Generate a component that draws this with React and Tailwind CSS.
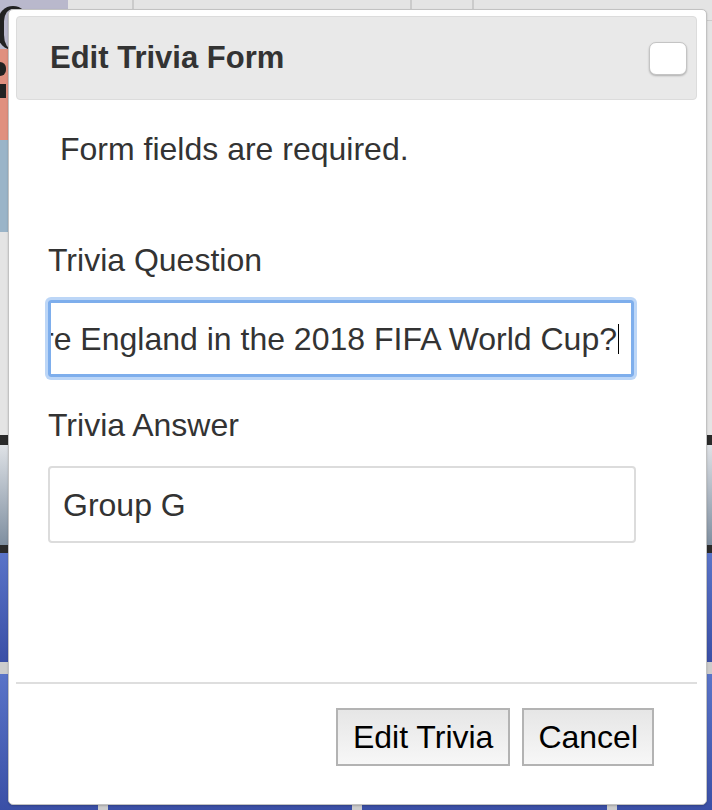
// Edit trivia dialog over a page backdrop
function Backdrop() {
    return (
        <div className="absolute inset-0 flex flex-col">
            {/* Page bands behind the dialog */}
            <div className="relative h-[435px] bg-[#e4e4e4]">
                <div className="absolute left-[132px] top-0 h-[12px] w-[2px] bg-[#cbcbcb]" />
                <div className="absolute left-[410px] top-0 h-[12px] w-[2px] bg-[#cbcbcb]" />
                <div className="absolute left-[472px] top-0 h-[12px] w-[2px] bg-[#cbcbcb]" />
                <div className="absolute left-0 top-0 h-[12px] w-[68px] bg-[#b9b8cc]" />
                <div className="absolute left-0 top-0 h-[49px] w-[10px] bg-[#b9b8cc]" />
                <div className="absolute left-[-2px] top-[6px] h-[44px] w-[30px] rounded-full border-l-[6px] border-t-[3px] border-[#222]" />
                <div className="absolute left-0 top-[49px] h-[91px] w-[10px] bg-[#e0907f]" />
                <div className="absolute left-0 top-[62px] h-[14px] w-[6px] rounded-r-full bg-[#222]" />
                <div className="absolute left-0 top-[84px] h-[14px] w-[6px] bg-[#222]" />
                <div className="absolute left-0 top-[140px] h-[92px] w-[10px] bg-[#9ab4c8]" />
                <div className="absolute right-0 top-[20px] h-[1px] w-[10px] bg-[#cccccc]" />
            </div>
            <div className="h-[10px] bg-[#2a2a2a]" />
            <div className="h-[100px] bg-linear-to-b from-[#dfe2e6] to-[#7f8fa0]" />
            <div className="h-[8px] bg-[#2a2a2a]" />
            <div className="h-[109px] bg-linear-to-b from-[#5a74c8] to-[#3a4fa6]" />
            <div className="h-[12px] bg-[#cccccc]" />
            <div className="relative flex-1 bg-linear-to-b from-[#5a74c8] to-[#3a4fa6]">
                <div className="absolute left-[98px] bottom-0 h-[6px] w-[10px] bg-[#cccccc]" />
                <div className="absolute left-[352px] bottom-0 h-[6px] w-[10px] bg-[#cccccc]" />
                <div className="absolute left-[607px] bottom-0 h-[6px] w-[10px] bg-[#cccccc]" />
            </div>
        </div>
    );
}

function App() {
    const question = "Which group were England in the 2018 FIFA World Cup?";

    return (
        <div className="relative w-[712px] h-[810px] overflow-hidden font-['Liberation_Sans',Arial,sans-serif]">
            <Backdrop />

            {/* Dialog */}
            <div className="absolute left-[8px] top-[9px] w-[699px] h-[796px] bg-white border border-[#c2c2c2] rounded-[5px] shadow-[0_1px_2px_rgba(0,0,0,0.2)] pt-[6px] pl-[7px] pr-[9px] flex flex-col">
                {/* Title bar */}
                <div className="h-[84px] shrink-0 bg-[#e9e9e9] border border-[#dcdcdc] rounded-[4px] flex items-center justify-between pl-[33px] pr-[9px]">
                    <span className="text-[31px] font-bold text-[#333333]">Edit Trivia Form</span>
                    <button className="w-[38px] h-[33px] bg-white border border-[#c4c4c4] rounded-[7px] shadow-[0_1px_2px_rgba(0,0,0,0.25)]" />
                </div>

                {/* Form */}
                <div className="pl-[32px] text-[32px] leading-[36px] text-[#333333]">
                    <p className="mt-[31px] ml-[12px]">Form fields are required.</p>

                    <label className="block mt-[75px]">Trivia Question</label>
                    <div className="mt-[22px] w-[586px] h-[77px] border-[3px] border-[#7eaeec] rounded-[3px] shadow-[0_0_0_3px_#bcd6f7] overflow-hidden flex items-center justify-end whitespace-nowrap pr-[12px]">
                        <span className="shrink-0">{question}</span>
                        <span className="shrink-0 w-px h-[30px] bg-black ml-[1px]" />
                    </div>

                    <label className="block mt-[30px]">Trivia Answer</label>
                    <div className="mt-[23px] w-[588px] h-[77px] border-2 border-[#dcdcdc] rounded-[4px] flex items-center pl-[13px]">
                        Group G
                    </div>
                </div>

                {/* Footer */}
                <div className="mt-[139px] h-[2px] bg-[#dedede]" />
                <div className="mt-[24px] flex justify-end gap-[12px] pr-[43px]">
                    <button className="h-[58px] px-[15px] border-2 border-[#b3b3b3] bg-linear-to-b from-[#e6e6e6] to-[#f7f7f7] text-[32px] text-black">
                        Edit Trivia
                    </button>
                    <button className="h-[58px] px-[14px] border-2 border-[#b3b3b3] bg-linear-to-b from-[#e6e6e6] to-[#f7f7f7] text-[32px] text-black">
                        Cancel
                    </button>
                </div>
            </div>
        </div>
    );
}

export default App;
